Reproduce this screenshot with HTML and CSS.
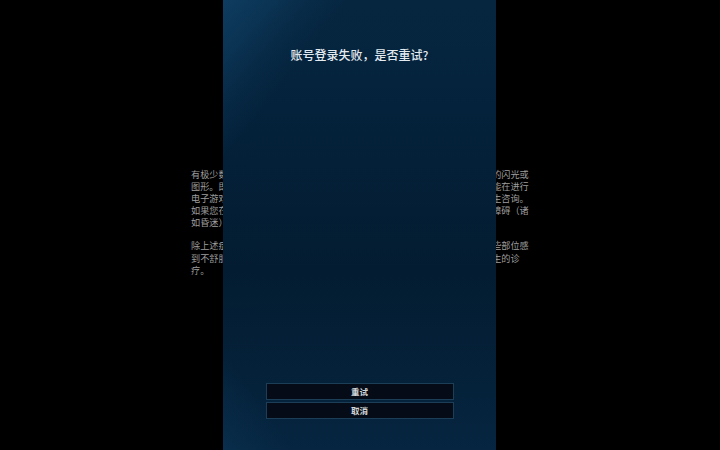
FILE: index.html
```html
<!DOCTYPE html>
<html lang="zh-CN">
<head>
<meta charset="utf-8">
<title>账号登录失败</title>
<link rel="stylesheet" href="styles.css">
</head>
<body>
<div class="screen">
  <div class="warning">
    <div class="para">
      <div class="line">有极少数人在观看特定视觉图像时可能会癫痫发作，这包括电子游戏中出现的闪光或</div>
      <div class="line">图形。即使是没有癫痫病史的人，也可能患有未被诊断出的病症，因此有可能在进行</div>
      <div class="line">电子游戏时引发光敏性癫痫发作。如果您有癫痫病史，请在玩游戏前先向医生咨询。</div>
      <div class="line">如果您在玩游戏时出现以下症状：头晕、视力改变、眼部或面部抽搐、意识障碍（诸</div>
      <div class="line">如昏迷）或痉挛，请立即停止游戏并咨询医生。</div>
    </div>
    <div class="para">
      <div class="line">除上述症状外，如果您在玩游戏时感到头痛、头晕、眼睛疲劳或身体其他某些部位感</div>
      <div class="line">到不舒服或疼痛，请立即停止游戏并休息。如果症状仍持续，请寻求专业医生的诊</div>
      <div class="line">疗。</div>
    </div>
  </div>

  <div class="dialog">
    <div class="dialog-bg"></div>
    <h1 class="title">账号登录失败，是否重试?</h1>
    <div class="actions">
      <button class="btn">重试</button>
      <button class="btn">取消</button>
    </div>
  </div>
</div>
</body>
</html>
```

FILE: styles.css
```css
html, body {
  margin: 0;
  padding: 0;
  background: #000;
}

.screen {
  position: relative;
  width: 720px;
  height: 450px;
  overflow: hidden;
  background: #000;
  font-family: "Noto Sans CJK SC", "Noto Sans", sans-serif;
}

.warning {
  padding-top: 168px;
  padding-left: 191px;
  color: #9e9e9e;
  font-size: 9.15px;
  line-height: 12px;
}

.para + .para {
  margin-top: 11px;
}

.para + .para .line {
  line-height: 12.5px;
}

.line {
  white-space: nowrap;
}

.dialog {
  position: absolute;
  left: 223px;
  top: 0;
  width: 273px;
  height: 450px;
  display: flex;
  flex-direction: column;
  align-items: center;
  background: linear-gradient(180deg, #062640 0%, #04213a 30%, #031c31 60%, #062540 100%);
  overflow: hidden;
}

.dialog-bg {
  position: absolute;
  left: 0;
  top: 0;
  width: 100%;
  height: 100%;
  background:
    linear-gradient(128deg, rgba(22, 82, 128, 0.5) 0%, rgba(22, 82, 128, 0.3) 8%, rgba(22, 82, 128, 0.12) 14%, rgba(0, 0, 0, 0) 20%),
    linear-gradient(55deg, rgba(18, 70, 110, 0.25) 0%, rgba(0, 0, 0, 0) 12%);
  pointer-events: none;
}

.title {
  position: relative;
  margin: 46px 0 0 0;
  font-size: 12px;
  line-height: 18px;
  font-weight: 500;
  color: #e3eaf0;
}

.actions {
  position: relative;
  margin-top: auto;
  margin-bottom: 31px;
  display: flex;
  flex-direction: column;
  gap: 2px;
}

.btn {
  width: 188px;
  height: 17px;
  margin: 0;
  padding: 0;
  background: #050c17;
  border: 1px solid #1c3e56;
  color: #d2d5d8;
  font-family: "Noto Sans CJK SC", "Noto Sans", sans-serif;
  font-size: 8.5px;
  font-weight: 700;
  line-height: 15px;
  cursor: pointer;
}
```
